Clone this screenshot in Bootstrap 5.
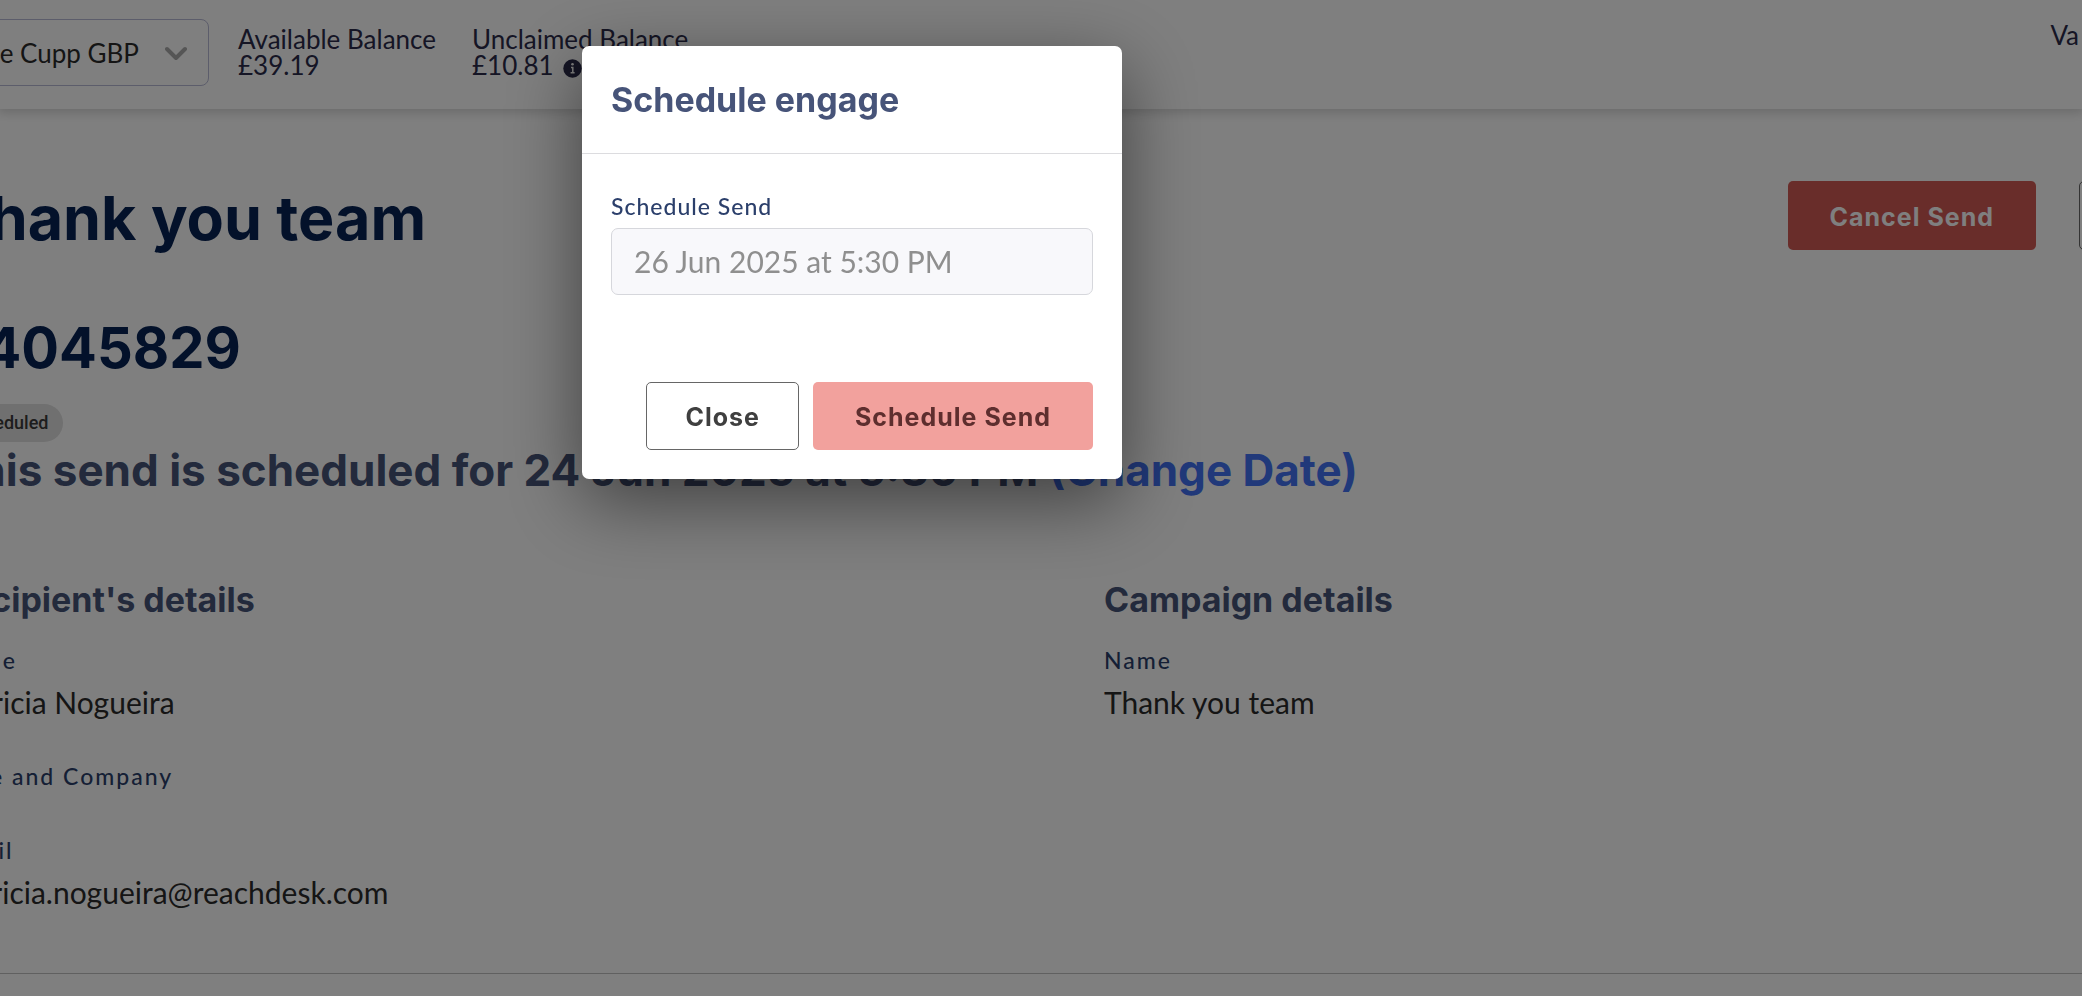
<!DOCTYPE html>
<html lang="en">
<head>
<meta charset="utf-8">
<meta name="viewport" content="width=device-width, initial-scale=1">
<title>Thank you team</title>
<link href="https://cdn.jsdelivr.net/npm/bootstrap@5.3.0/dist/css/bootstrap.min.css" rel="stylesheet">
<style>
  :root { --head: Inter, "Liberation Sans", sans-serif; --text: Lato, "Liberation Sans", sans-serif; --slate: #475479; --navy: #2b3f6b; }
  body { font-family: var(--text); color: #2b2b2b; background: #fff; overflow: hidden; }
  .shell { overflow: hidden; min-height: 100vh; }
  .topbar { padding: 19px 0 23px; box-shadow: 0 2px 10px 2px rgba(0,0,0,.16); color: #2b2b4a; font-size: 26px; line-height: 26px; }
  .account { height: 67px; width: 260px; margin-left: -51px; padding: 1px 21px 0 0; border: 1px solid #b9bbd6; border-radius: 8px; background: #fff; color: #2b2b2b; font-size: 26px; white-space: nowrap; }
  .account span { margin-right: 26px; }
  .balances { gap: 36px; padding: 2px 0 0 29px; }
  .balances svg { margin: 0 0 3px 3px; }
  .who { margin: 3px 3px 0 0; }
  .page-body { margin-left: -51px; padding-top: 72px; }
  .title-row { margin: 0 -47px 56px 0; gap: 43px; }
  h1, .send-id { font: 700 61px/74px var(--head); color: #062254; margin: 0; }
  .send-id { font-size: 56px; margin-bottom: 19px; }
  .btn { font: 700 25px/30px var(--head); letter-spacing: 1px; border-radius: 5px; height: 68px; padding: 2px 41px 0; }
  .btn-cancel, .btn-cancel:hover { background: #d25a54; color: #fff; }
  .title-row .btn { height: 69px; }
  .btn-line, .btn-line:hover { border: 1px solid #666; color: #3f3f3f; background: #fff; padding: 2px 38px 0; }
  .btn-send, .btn-send:disabled { background: #f2a19d; color: #5e2e2e; opacity: 1; border: 0; padding: 2px 42px 0; }
  .status { display: table; font-size: 18px; line-height: 38px; padding: 0 15px; border-radius: 19px; background: #e0e0e0; color: #3a3a3a; font-family: Roboto, sans-serif; font-weight: 500; }
  .when { font: 700 44px/52px var(--head); color: var(--slate); margin: 2px 0 84px; }
  .when a { color: #4272f4; text-decoration: none; }
  h3, .modal-title { font: 700 34px/40px var(--head); color: var(--slate); margin: 0; }
  h3 { margin-bottom: 26px; }
  dl { margin: 0; }
  dt, .form-label { font-size: 23px; line-height: 28px; font-weight: 500; letter-spacing: 2px; color: var(--navy); margin: 0; }
  dd { font-size: 30px; line-height: 36px; margin: 10px 0 42px; }
  .no-value { margin-bottom: 46px; }
  .details { border-bottom: 1px solid #c0c0c0; padding-bottom: 21px; }
  .details > div { width: 1155px; flex: none; }
  .modal { padding-right: 378px; }
  .modal-dialog { max-width: 540px; margin: 46px auto; }
  .modal-content { border: 0; border-radius: 7px; box-shadow: 0 22px 76px rgba(0,0,0,.5); }
  .modal-header { padding: 34px 29px 33px; border-bottom: 1px solid #dcdcdf; }
  .modal-body { padding: 38px 29px 58px; }
  .form-label { margin-bottom: 8px; display: block; letter-spacing: 1px; }
  .form-control, .form-control:disabled { height: 67px; padding: 0 22px 2px; border: 1px solid #d6d7dc; border-radius: 7px; background: #f8f8fb; color: #8f8f8f; font-size: 30px; }
  .modal-footer { border: 0; gap: 14px; padding: 29px; }
  .modal-footer > * { margin: 0; }
</style>
</head>
<body>
<div class="shell">
  <header class="topbar d-flex align-items-center">
    <button class="account d-flex align-items-center justify-content-end" type="button">
      <span>Katie Cupp GBP</span>
      <svg class="flex-shrink-0" width="22" height="16" viewBox="0 0 22 16" fill="none" stroke="#aaa" stroke-width="4" stroke-linecap="round" stroke-linejoin="round" aria-hidden="true"><path d="M2 4l9 9 9-9"/></svg>
    </button>
    <div class="balances d-flex">
      <div>Available Balance<br>£39.19</div>
      <div>Unclaimed Balance<br>£10.81
        <svg width="19" height="19" viewBox="0 0 19 19" class="align-text-bottom" aria-hidden="true"><circle cx="9.5" cy="9.5" r="9.2" fill="#2b2b4a"/><circle cx="9.5" cy="5.2" r="1.3" fill="#fff"/><path d="M8 8.5h1.8v5M7.6 13.8h4" fill="none" stroke="#fff" stroke-width="1.5"/></svg>
      </div>
    </div>
    <div class="who ms-auto align-self-start">Va</div>
  </header>

  <main class="page-body">
    <div class="title-row d-flex align-items-start">
      <h1 class="me-auto">Thank you team</h1>
      <button class="btn btn-cancel" type="button">Cancel Send</button>
      <button class="btn btn-line px-4" type="button" aria-label="More"></button>
    </div>
    <h2 class="send-id">24045829</h2>
    <span class="status">Scheduled</span>
    <h2 class="when">This send is scheduled for 24 Jun 2025 at 5:30 PM <a href="#">(Change Date)</a></h2>
    <div class="details d-flex">
      <div>
        <h3>Recipient's details</h3>
        <dl>
          <dt>Name</dt><dd>Patricia Nogueira</dd>
          <dt class="no-value">Title and Company</dt>
          <dt>Email</dt><dd>patricia.nogueira@reachdesk.com</dd>
        </dl>
      </div>
      <div>
        <h3>Campaign details</h3>
        <dl><dt>Name</dt><dd>Thank you team</dd></dl>
      </div>
    </div>
  </main>
</div>

<div class="modal-backdrop show"></div>
<div class="modal show d-block" role="dialog" aria-labelledby="dlg-title">
  <div class="modal-dialog">
    <form class="modal-content">
      <div class="modal-header"><h2 class="modal-title" id="dlg-title">Schedule engage</h2></div>
      <div class="modal-body">
        <label class="form-label" for="send-at">Schedule Send</label>
        <input class="form-control" id="send-at" type="text" value="26 Jun 2025 at 5:30 PM" disabled>
      </div>
      <div class="modal-footer">
        <button class="btn btn-line" type="button">Close</button>
        <button class="btn btn-send" type="submit" disabled>Schedule Send</button>
      </div>
    </form>
  </div>
</div>
<script src="https://cdn.jsdelivr.net/npm/bootstrap@5.3.0/dist/js/bootstrap.bundle.min.js"></script>
</body>
</html>
